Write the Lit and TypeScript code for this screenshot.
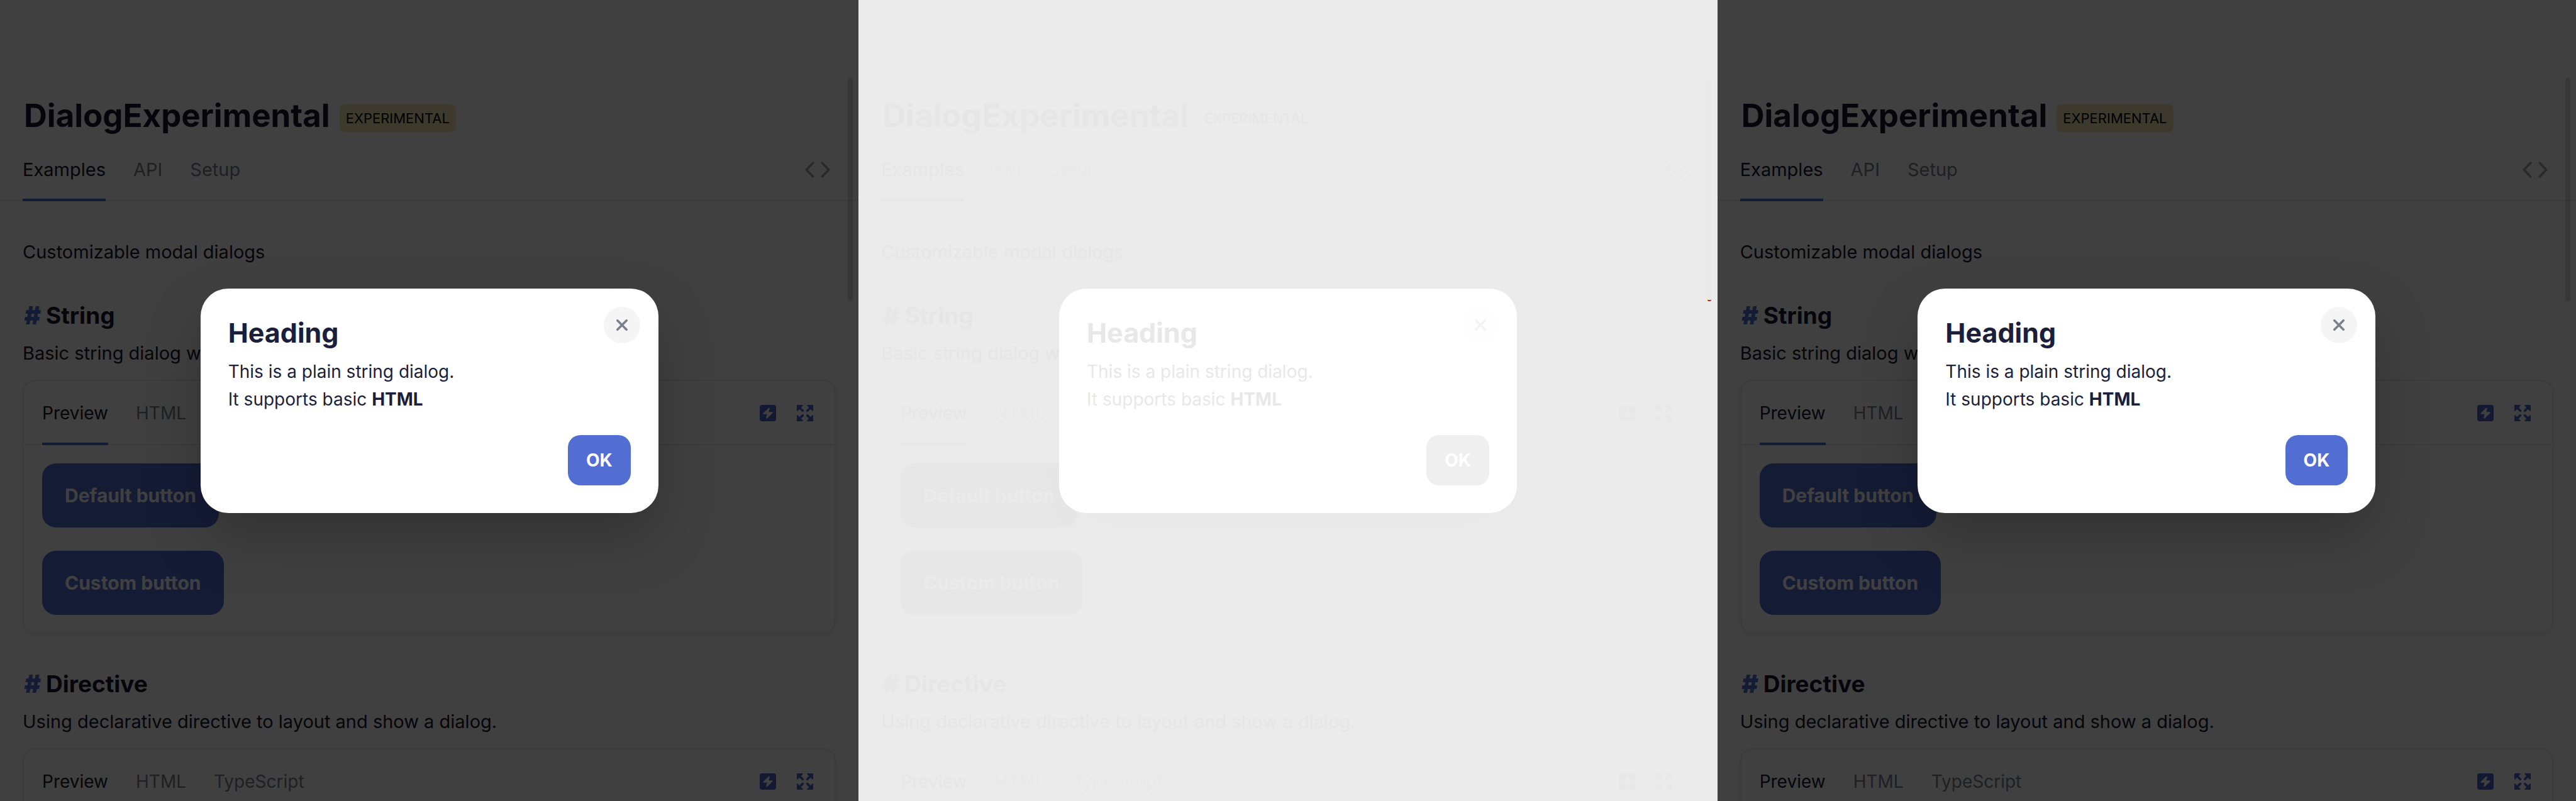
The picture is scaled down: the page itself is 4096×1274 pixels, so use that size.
import { LitElement, html, css, svg, nothing } from "lit";
import { customElement, property } from "lit/decorators.js";

const codeIcon = svg`<svg class="code" viewBox="0 0 44 28" aria-hidden="true">
  <path d="M14 2 2.500 14 14 26M30 2l11.500 12L30 26" fill="none" stroke="currentColor" stroke-width="4" stroke-linecap="round" stroke-linejoin="round"/>
</svg>`;

const boltIcon = svg`<svg class="icon" viewBox="0 0 28 28" aria-hidden="true">
  <path fill="currentColor" fill-rule="evenodd" d="M4 0h20a4 4 0 0 1 4 4v20a4 4 0 0 1-4 4H4a4 4 0 0 1-4-4V4a4 4 0 0 1 4-4Zm10.800 5.600L6.200 14c-.9.900-.5 2 .8 2h5.500l-1.400 5.400c-.4 1.500 1 2.200 2.100 1.200l8.600-8.400c.9-.9.500-2-.8-2h-5.500l1.400-5.400c.4-1.500-1-2.200-2.100-1.200Z"/>
</svg>`;

const expandIcon = svg`<svg class="icon" viewBox="0 0 28 28" aria-hidden="true">
  <g fill="currentColor" stroke="currentColor" stroke-linecap="round" stroke-linejoin="round">
    <path stroke-width="2" d="M1 1h8.500L1 9.500Z"/><path stroke-width="4" d="m4 4 6 6"/>
    <path stroke-width="2" d="M27 1h-8.500l8.500 8.500Z"/><path stroke-width="4" d="m24 4-6 6"/>
    <path stroke-width="2" d="M1 27h8.500L1 18.500Z"/><path stroke-width="4" d="m4 24 6-6"/>
    <path stroke-width="2" d="M27 27h-8.500l8.500-8.500Z"/><path stroke-width="4" d="m24 24-6-6"/>
  </g>
</svg>`;

const closeIcon = svg`<svg class="cross" viewBox="0 0 20 20" aria-hidden="true">
  <path d="m2 2 16 16M18 2 2 18" fill="none" stroke="currentColor" stroke-width="4" stroke-linecap="round"/>
</svg>`;

@customElement("demo-page")
export class DemoPage extends LitElement {
  @property({ reflect: true }) tone: "dimmed" | "faded" = "dimmed";

  static styles = css`
    :host {
      --bg: #fff;
      --text: #14172c;
      --muted: #79818c;
      --accent: #526ed3;
      --icon: #4c66cc;
      --code: #a0a3a8;
      --line: #ebebeb;
      --badge: #f2e6b4;
      --badge-text: #000;
      --button-text: #fff;
      --veil: rgba(0, 0, 0, 0.75);
      --track: rgba(0, 0, 0, 0.15);
      --card-shadow: 0 3px 8px rgba(0, 0, 0, 0.08);
      --dialog-shadow: 0 40px 92px rgba(0, 0, 0, 0.22);
      --dialog-text: #1b1f3b;
      --close-bg: #f5f5f5;
      --close: #79818c;
      --ok: #526ed3;
      display: block;
      position: relative;
      min-width: 0;
      height: 100%;
      overflow: hidden;
      background: var(--bg);
      color: var(--text);
      font: 400 29px/40px Inter, "Liberation Sans", sans-serif;
    }
    :host([tone="faded"]) {
      --bg: #ebebeb;
      --text: #e6e6e6;
      --muted: #e9e9e9;
      --accent: #e7e7e7;
      --icon: #e8e8e8;
      --code: #e9e9e9;
      --line: #ebebeb;
      --badge: transparent;
      --badge-text: #e6e6e6;
      --button-text: #ebebeb;
      --veil: transparent;
      --track: rgba(0, 0, 0, 0.006);
      --card-shadow: none;
      --dialog-shadow: 0 40px 92px rgba(0, 0, 0, 0.013);
      --dialog-text: #e8e8e8;
      --close-bg: #fefefe;
      --close: #f2f2f2;
      --ok: #efefef;
    }
    * {
      box-sizing: border-box;
    }
    h1, h2, h3, p {
      margin: 0;
    }
    button {
      margin: 0;
      padding: 0;
      border: 0;
      background: none;
      font: inherit;
      color: inherit;
    }
    svg {
      display: block;
    }
    .page {
      padding-top: 152px;
    }
    .title {
      display: flex;
      align-items: center;
      gap: 15px;
      padding: 0 38px;
    }
    h1 {
      font-size: 51px;
      line-height: 64px;
      font-weight: 700;
    }
    .badge {
      margin-top: 8px;
      padding: 0 10px;
      border-radius: 8px;
      background: var(--badge);
      color: var(--badge-text);
      font-size: 21px;
      line-height: 44px;
      font-weight: 400;
      font-size: 22px;
    }
    .bar {
      display: flex;
      align-items: center;
      gap: 44px;
      box-shadow: inset 0 -2px var(--line);
    }
    .main-bar {
      height: 100px;
      margin-top: 4px;
      padding: 0 45px 0 36px;
    }
    .tab {
      height: 100%;
      color: var(--muted);
    }
    .tab.active {
      color: var(--text);
      box-shadow: inset 0 -4px var(--accent);
    }
    .tools {
      display: flex;
      gap: 33px;
      margin-left: auto;
      color: var(--icon);
    }
    .code {
      width: 40px;
      height: 26px;
      color: var(--code);
    }
    .icon {
      width: 26px;
      height: 26px;
    }
    .content {
      display: flex;
      flex-direction: column;
      gap: 57px;
      padding: 61px 36px 0;
    }
    h2 {
      display: flex;
      font-size: 37px;
      line-height: 48px;
      font-weight: 700;
    }
    .hash {
      width: 37px;
      padding-left: 2px;
      color: var(--accent);
      font-size: 40px;
      font-weight: 900;
      font-style: italic;
      text-decoration: none;
    }
    .about {
      margin-top: 16px;
    }
    .card {
      margin-top: 22px;
      border: 2px solid var(--line);
      border-radius: 20px;
      box-shadow: var(--card-shadow);
    }
    .card-bar {
      height: 102px;
      padding: 0 34px 0 29px;
      font-size: 28px;
    }
    .demo {
      display: flex;
      flex-direction: column;
      align-items: flex-start;
      gap: 37px;
      padding: 29px 29px 27px;
    }
    .action {
      height: 102px;
      padding: 0 36px;
      border-radius: 22px;
      background: var(--accent);
      color: var(--button-text);
      font-size: 30px;
      font-weight: 700;
    }
    .track {
      position: absolute;
      top: 124px;
      right: 9px;
      width: 8px;
      height: 355px;
      border-radius: 4px;
      background: var(--track);
    }
    .mark {
      position: absolute;
      top: 475px;
      right: 9px;
      width: 8px;
      height: 4px;
      border-radius: 0 0 4px 4px;
      background: linear-gradient(90deg, #ff0 1px, transparent 1px 7px, #ff0 7px),
        linear-gradient(transparent 2px, #f00 2px);
    }
    .overlay {
      position: absolute;
      inset: 0;
      display: flex;
      align-items: center;
      justify-content: center;
      background: var(--veil);
    }
    .dialog {
      position: relative;
      display: flex;
      flex-direction: column;
      width: 728px;
      max-width: 100%;
      padding: 42px 44px 44px;
      border-radius: 44px;
      background: #fff;
      color: var(--dialog-text);
      box-shadow: var(--dialog-shadow);
    }
    h3 {
      font-size: 43px;
      line-height: 56px;
      font-weight: 700;
    }
    .message {
      margin: 12px 0 35px;
      font-size: 28px;
      line-height: 44px;
    }
    .ok {
      align-self: flex-end;
      height: 80px;
      padding: 0 29px;
      border-radius: 20px;
      background: var(--ok);
      color: #fff;
      font-size: 28px;
      font-weight: 700;
    }
    .close {
      position: absolute;
      top: 29px;
      right: 29px;
      display: grid;
      place-items: center;
      width: 58px;
      height: 58px;
      border-radius: 50%;
      background: var(--close-bg);
      color: var(--close);
    }
    .cross {
      width: 18px;
      height: 18px;
    }
  `;

  private tabs(labels: string[]) {
    return labels.map(
      (label, i) => html`<button class="tab ${i === 0 ? "active" : ""}" type="button">${label}</button>`
    );
  }

  private example(name: string, about: string, tabs: string[], actions: string[]) {
    return html`
      <section>
        <h2><a class="hash" href="#${name}" aria-label="Link to ${name}">#</a>${name}</h2>
        <p class="about">${about}</p>
        <div class="card">
          <div class="bar card-bar">
            ${this.tabs(tabs)}
            <div class="tools">
              <button type="button" aria-label="Edit online">${boltIcon}</button>
              <button type="button" aria-label="Fullscreen">${expandIcon}</button>
            </div>
          </div>
          <div class="demo">
            ${actions.map((a) => html`<button class="action" type="button">${a}</button>`)}
          </div>
        </div>
      </section>
    `;
  }

  render() {
    return html`
      <div class="page">
        <header class="title">
          <h1>DialogExperimental</h1>
          <span class="badge">EXPERIMENTAL</span>
        </header>
        <nav class="bar main-bar">
          ${this.tabs(["Examples", "API", "Setup"])}
          <div class="tools"><button type="button" aria-label="Source code">${codeIcon}</button></div>
        </nav>
        <main class="content">
          <p>Customizable modal dialogs</p>
          ${this.example("String", "Basic string dialog wi", ["Preview", "HTML"], ["Default button", "Custom button"])}
          ${this.example(
            "Directive",
            "Using declarative directive to layout and show a dialog.",
            ["Preview", "HTML", "TypeScript"],
            []
          )}
        </main>
      </div>
      <div class="track"></div>
      ${this.tone === "faded" ? html`<div class="mark"></div>` : nothing}
      <div class="overlay">
        <div class="dialog" role="dialog" aria-label="Heading">
          <h3>Heading</h3>
          <p class="message">This is a plain string dialog.<br />It supports basic <strong>HTML</strong></p>
          <button class="ok" type="button">OK</button>
          <button class="close" type="button" aria-label="Close">${closeIcon}</button>
        </div>
      </div>
    `;
  }
}

@customElement("app-root")
export class AppRoot extends LitElement {
  static styles = css`
    :host {
      display: grid;
      grid-template-columns: repeat(3, minmax(0, 1fr));
      height: 100vh;
    }
  `;

  render() {
    return html`
      <demo-page tone="dimmed"></demo-page>
      <demo-page tone="faded"></demo-page>
      <demo-page tone="dimmed"></demo-page>
    `;
  }
}
